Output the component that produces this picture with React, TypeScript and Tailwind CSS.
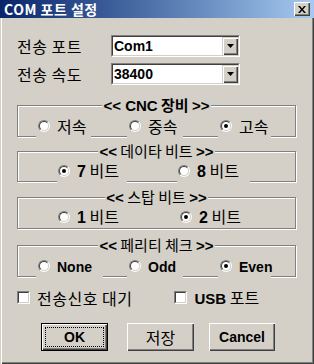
import React from "react";

const KO = "font-['Noto_Sans_CJK_KR','Liberation_Sans',sans-serif]";
const LA = "font-['Liberation_Sans','Noto_Sans_CJK_KR',sans-serif]";

function Radio({ checked }: { checked?: boolean }) {
    return (
        <span className="inline-block w-3 h-3 shrink-0 rounded-full border border-t-[#808080] border-l-[#808080] border-r-white border-b-white">
            <span className="flex items-center justify-center w-full h-full rounded-full border border-t-[#404040] border-l-[#404040] border-r-[#d4d0c8] border-b-[#d4d0c8] bg-white">
                {checked && <span className="block w-1 h-1 rounded-full bg-black" />}
            </span>
        </span>
    );
}

function Check() {
    return (
        <span className="inline-block w-[13px] h-[13px] shrink-0 border border-t-[#808080] border-l-[#808080] border-r-white border-b-white">
            <span className="block w-full h-full border border-t-[#404040] border-l-[#404040] border-r-[#d4d0c8] border-b-[#d4d0c8] bg-white" />
        </span>
    );
}

function Combo({ value }: { value: string }) {
    return (
        <div className="w-[129px] h-[22px] border border-t-[#808080] border-l-[#808080] border-r-white border-b-white">
            <div className="flex h-full border border-t-[#404040] border-l-[#404040] border-r-[#d4d0c8] border-b-[#d4d0c8] bg-white">
                <span className={`flex-1 pl-[1px] text-[14px] leading-[18px] font-bold text-black ${LA}`}>
                    {value}
                </span>
                <span className="w-4 h-full bg-[#d4d0c8] shadow-[inset_1px_1px_0_#d4d0c8,inset_2px_2px_0_#fff,inset_-1px_-1px_0_#404040,inset_-2px_-2px_0_#808080] flex items-center justify-center">
                    <svg width="7" height="4" viewBox="0 0 7 4">
                        <path d="M0 0h7L3.5 4z" fill="#000" />
                    </svg>
                </span>
            </div>
        </div>
    );
}

function Group({ title, children }: { title: React.ReactNode; children: React.ReactNode }) {
    return (
        <fieldset className="ml-[17px] w-[279px] min-w-0 border border-[#808080] p-0 shadow-[inset_1px_1px_0_#fff,1px_1px_0_#fff]">
            <legend className={`mx-auto px-[1px] bg-[#d4d0c8] text-[15px] leading-[14px] text-black whitespace-nowrap ${KO}`}>
                {title}
            </legend>
            {children}
        </fieldset>
    );
}

function Item({
    className,
    checked,
    children,
}: {
    className: string;
    checked?: boolean;
    children: React.ReactNode;
}) {
    return (
        <div className={`flex items-start bg-[#d4d0c8] h-full ${className}`}>
            <span className="flex items-center gap-[7px]">
                <Radio checked={checked} />
                <span className={`text-[16px] leading-[12px] text-black whitespace-nowrap ${KO}`}>
                    {children}
                </span>
            </span>
        </div>
    );
}

const raised = "bg-[#d4d0c8] shadow-[inset_1px_1px_0_#fff,inset_-1px_-1px_0_#404040,inset_-2px_-2px_0_#808080]";

export default function App() {
    return (
        <div className="w-[314px] h-[364px] bg-[#d4d0c8] flex flex-col overflow-hidden select-none">

            {/* Title bar */}

            <div className="h-[18px] flex items-center justify-between bg-gradient-to-r from-[#0a246a] to-[#a6caf0] pl-[4px] pr-[4px]">
                <span className={`text-white text-[14px] font-bold leading-none tracking-[0.5px] ${KO}`}>
                    COM 포트 설정
                </span>
                <span className={`w-4 h-[14px] flex items-center justify-center ${raised}`}>
                    <svg width="8" height="7" viewBox="0 0 8 7">
                        <path d="M0 0h2l2 2.5L6 0h2L5 3.5 8 7H6L4 4.5 2 7H0l3-3.5z" fill="#000" />
                    </svg>
                </span>
            </div>

            {/* Body */}

            <div className="flex-1 flex flex-col shadow-[inset_1px_0_0_#d4d0c8,inset_2px_0_0_#fff,inset_-1px_-1px_0_#404040,inset_-2px_-2px_0_#808080]">

                <div className="mt-[17px] flex items-center h-[22px]">
                    <span className={`ml-[17px] w-[94px] text-[16px] leading-none tracking-[0.5px] text-black ${KO}`}>전송 포트</span>
                    <Combo value="Com1" />
                </div>

                <div className="mt-[6px] flex items-center h-[22px]">
                    <span className={`ml-[17px] w-[94px] text-[16px] leading-none tracking-[0.5px] text-black ${KO}`}>전송 속도</span>
                    <Combo value="38400" />
                </div>

                {/* CNC 장비 */}

                <div className="mt-[13px]">
                    <Group title={<><b className={LA}>&lt;&lt; CNC</b> <b>장비</b> <b className={LA}>&gt;&gt;</b></>}>
                        <div className="flex h-[25px] -mb-[2px] pt-[7px]">
                            <Item className="w-[55px] ml-[18px] pl-[2px]">저속</Item>
                            <Item className="w-[56px] ml-[36px] pl-[2px]">중속</Item>
                            <Item className="w-[53px] ml-[35px] pl-[2px]" checked>고속</Item>
                        </div>
                    </Group>
                </div>

                {/* 데이타 비트 */}

                <div className="mt-[7px]">
                    <Group title={<><b className={LA}>&lt;&lt;</b> 데이타 비트 <b className={LA}>&gt;&gt;</b></>}>
                        <div className="flex h-[24px] -mb-[2px] pt-[5px]">
                            <Item className="w-[70px] ml-[39px] pl-[1px]" checked><b className={LA}>7</b> 비트</Item>
                            <Item className="w-[73px] ml-[50px] pl-[1px]"><b className={LA}>8</b> 비트</Item>
                        </div>
                    </Group>
                </div>

                {/* 스탑 비트 */}

                <div className="mt-[8px]">
                    <Group title={<><b className={LA}>&lt;&lt;</b> 스탑 비트 <b className={LA}>&gt;&gt;</b></>}>
                        <div className="flex h-[23px] pt-[5px]">
                            <Item className="w-[70px] ml-[39px] pl-[1px]"><b className={LA}>1</b> 비트</Item>
                            <Item className="w-[73px] ml-[50px] pl-[3px]" checked><b className={LA}>2</b> 비트</Item>
                        </div>
                    </Group>
                </div>

                {/* 페리티 체크 */}

                <div className="mt-[9px]">
                    <Group title={<><b className={LA}>&lt;&lt;</b> 페리티 체크 <b className={LA}>&gt;&gt;</b></>}>
                        <div className="flex h-[25px] -mb-[2px] pt-[6px]">
                            <Item className="w-[67px] ml-[18px] pl-[2px]"><b className={`text-[14px] ${LA}`}>None</b></Item>
                            <Item className="w-[56px] ml-[24px] pl-[2px]"><b className={`text-[14px] ${LA}`}>Odd</b></Item>
                            <Item className="w-[53px] ml-[35px] pl-[2px]" checked><b className={`text-[14px] ${LA}`}>Even</b></Item>
                        </div>
                    </Group>
                </div>

                {/* Checkboxes */}

                <div className="mt-[14px] flex items-center h-[13px]">
                    <span className="ml-[17px] flex items-center gap-[7px]">
                        <Check />
                        <span className={`text-[16px] leading-none tracking-[0.5px] text-black ${KO}`}>전송신호 대기</span>
                    </span>
                    <span className="ml-[42px] flex items-center gap-[7px]">
                        <Check />
                        <span className={`text-[16px] leading-none text-black ${KO}`}><b className={`text-[15px] ${LA}`}>USB</b> 포트</span>
                    </span>
                </div>

                {/* Buttons */}

                <div className="mt-[19px] flex h-[28px]">
                    <button className="ml-[41px] w-[67px] h-full border border-black bg-[#d4d0c8] p-0">
                        <span className={`flex items-center justify-center w-full h-full p-[3px] ${raised}`}>
                            <span className={`flex items-center justify-center w-full h-full border border-dotted border-black text-[14px] font-bold text-black ${LA}`}>
                                OK
                            </span>
                        </span>
                    </button>
                    <button className={`ml-[19px] w-[67px] h-full text-[16px] text-black ${raised} ${KO}`}>
                        저장
                    </button>
                    <button className={`ml-[15px] w-[66px] h-full text-[14px] font-bold text-black ${raised} ${LA}`}>
                        Cancel
                    </button>
                </div>

            </div>

        </div>
    );
}
